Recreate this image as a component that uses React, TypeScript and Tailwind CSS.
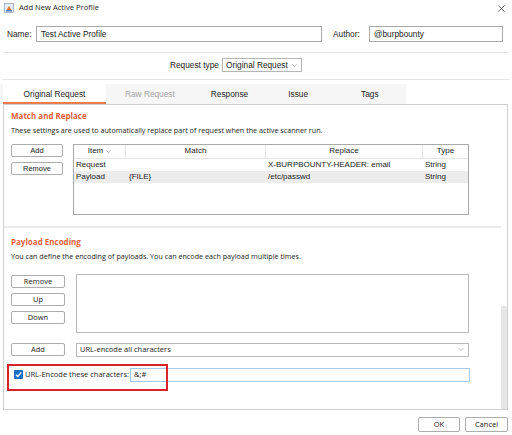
import * as React from "react"

const arial = { fontFamily: '"Liberation Sans", Arial, sans-serif' }
const segoe = { fontFamily: '"Open Sans", "Noto Sans", sans-serif' }

function Chevron({ className = "" }: { className?: string }) {
  return (
    <svg viewBox="0 0 8 5" className={className} fill="none" stroke="#8a8a8a" strokeWidth="1">
      <polyline points="0.5,0.5 4,4 7.5,0.5" />
    </svg>
  )
}

function Btn({ label, w, seg }: { label: string; w: string; seg?: boolean }) {
  return (
    <div
      className={`${w} flex h-[13px] items-center justify-center rounded-[2px] border border-[#adadad] bg-white text-[7.5px] text-[#222]`}
      style={seg ? segoe : arial}
    >
      {label}
    </div>
  )
}

const rows = [
  { item: "Request", match: "", replace: "X-BURPBOUNTY-HEADER: email", type: "String", sel: false },
  { item: "Payload", match: "{FILE}", replace: "/etc/passwd", type: "String", sel: true },
]

export default function App() {
  return (
    <div className="relative h-[435px] w-[512px] overflow-hidden bg-white text-[#1c1c1c]">
      {/* title bar */}
      <div className="flex h-[15px] items-center pl-[4px] pr-[7px] pt-[1px]" style={segoe}>
        <svg viewBox="0 0 10 10" className="h-[10px] w-[10px]">
          <rect x="0.5" y="0.5" width="9" height="9" fill="#e9eef5" stroke="#8fa6c4" strokeWidth="0.8" />
          <path d="M2 8 L5 3 L8 8 Z" fill="#e0742f" />
          <rect x="2" y="7" width="6" height="1.5" fill="#4a7ab7" />
        </svg>
        <span className="ml-[5px] text-[7.6px]">Add New Active Profile</span>
        <span className="ml-auto">
          <svg viewBox="0 0 8 8" className="h-[7px] w-[7px]" stroke="#333" strokeWidth="0.9">
            <line x1="0.5" y1="0.5" x2="7.5" y2="7.5" />
            <line x1="7.5" y1="0.5" x2="0.5" y2="7.5" />
          </svg>
        </span>
      </div>

      {/* name / author */}
      <div className="mt-[11px] flex h-[16px] items-center text-[8.3px]" style={arial}>
        <span className="ml-[7px] w-[29px]">Name:</span>
        <div className="flex h-[16px] w-[286px] items-center border border-[#a9a9a9] pl-[4px]">
          Test Active Profile
        </div>
        <span className="ml-[11px] w-[36px]">Author:</span>
        <div className="flex h-[16px] w-[134px] items-center border border-[#a9a9a9] pl-[4px]">
          @burpbounty
        </div>
      </div>

      <div className="mx-[3px] mt-[10px] h-px bg-[#e4e4e4]" />

      {/* request type */}
      <div className="mt-[5px] flex h-[14px] items-center whitespace-nowrap text-[8.3px]" style={arial}>
        <span className="ml-[170px] w-[52px]">Request type</span>
        <div className="flex h-[14px] w-[80px] shrink-0 items-center border border-[#b5b5b5] pl-[3px]">
          Original Request
          <Chevron className="ml-auto mr-[4px] h-[3px] w-[5px]" />
        </div>
      </div>

      <div className="mx-[3px] mt-[7px] h-px bg-[#e4e4e4]" />

      {/* tabs */}
      <div className="mt-[4px] flex h-[20px] text-[8.3px]" style={arial}>
        <div className="flex w-[406px] bg-[#f6f6f6] pl-[3px]">
          <div className="flex w-[103px] items-center justify-center border-b-2 border-[#ef7a4c] bg-white pt-[2px]">
            Original Request
          </div>
          <div className="ml-[19px] flex items-center text-[#a3a3a3]">Raw Request</div>
          <div className="ml-[36px] flex items-center">Response</div>
          <div className="ml-[40px] flex items-center">Issue</div>
          <div className="ml-[53px] flex items-center">Tags</div>
        </div>
      </div>

      {/* panel */}
      <div className="ml-[3px] flex h-[306px] w-[505px] border border-[#cfcfcf]">
        <div className="flex w-[497px] flex-col">
          {/* match and replace */}
          <div className="h-[121px] pl-[7px]">
            <div className="mt-[5px] text-[8px] font-bold text-[#e2603a]" style={segoe}>
              Match and Replace
            </div>
            <div className="mt-[3px] text-[7.2px]" style={segoe}>
              These settings are used to automatically replace part of request when the active scanner run.
            </div>
            <div className="mt-[8px] flex">
              <div className="flex flex-col gap-[5px]">
                <Btn label="Add" w="w-[52px]" />
                <Btn label="Remove" w="w-[52px]" />
              </div>
              <div className="ml-[10px] h-[71px] w-[396px] border border-[#a9a9a9] text-[8px]" style={arial}>
                <div className="flex h-[14px] border-b border-[#e4e4e4]">
                  <div className="flex w-[52px] items-center justify-center border-r border-[#e4e4e4]">
                    Item
                    <Chevron className="ml-[3px] h-[3px] w-[5px]" />
                  </div>
                  <div className="flex w-[140px] items-center justify-center border-r border-[#e4e4e4]">Match</div>
                  <div className="flex w-[157px] items-center justify-center border-r border-[#e4e4e4]">Replace</div>
                  <div className="flex flex-1 items-center justify-center">Type</div>
                </div>
                {rows.map((r) => (
                  <div key={r.item} className={`flex h-[12px] items-center ${r.sel ? "bg-[#ececec]" : ""}`}>
                    <div className="w-[52px] pl-[2px]">{r.item}</div>
                    <div className="w-[140px] pl-[3px]">{r.match}</div>
                    <div className="w-[157px] pl-[2px]">{r.replace}</div>
                    <div className="flex-1 pl-[2px]">{r.type}</div>
                  </div>
                ))}
              </div>
            </div>
          </div>

          <div className="h-[2px] bg-[#ebebeb]" />

          {/* payload encoding */}
          <div className="relative flex-1 pl-[7px]" style={segoe}>
            <div className="mt-[8px] text-[8px] font-bold text-[#e2603a]">Payload Encoding</div>
            <div className="mt-[3px] text-[7.2px]">
              You can define the encoding of payloads. You can encode each payload multiple times.
            </div>
            <div className="mt-[12px] flex">
              <div className="flex flex-col gap-[5px] pt-[1px]">
                <Btn label="Remove" w="w-[54px]" seg />
                <Btn label="Up" w="w-[54px]" seg />
                <Btn label="Down" w="w-[54px]" seg />
              </div>
              <div className="ml-[11px] h-[59px] w-[393px] border border-[#b8b8b8]" />
            </div>
            <div className="mt-[10px] flex">
              <Btn label="Add" w="w-[54px]" seg />
              <div className="ml-[11px] flex h-[14px] w-[393px] items-center border border-[#b8b8b8] pl-[3px] text-[7.5px]">
                URL-encode all characters
                <Chevron className="ml-auto mr-[4px] h-[3px] w-[6px]" />
              </div>
            </div>
            <div className="mt-[11px] flex items-center">
              <svg viewBox="0 0 10 10" className="ml-[3px] h-[9px] w-[9px]">
                <rect x="0" y="0" width="10" height="10" rx="1" fill="#1f6ec4" />
                <polyline points="2.2,5.2 4.2,7.2 8,2.8" fill="none" stroke="#fff" strokeWidth="1.4" />
              </svg>
              <span className="ml-[2px] w-[105px] text-[7.5px]">URL-Encode these characters:</span>
              <div className="flex h-[14px] w-[340px] items-center border border-[#a6c8ea] pl-[3px] text-[7.5px]">
                &amp;;#
              </div>
            </div>
            {/* annotation box */}
            <div className="absolute left-[3px] top-[136px] h-[27px] w-[161px] border-2 border-[#d8232a]" />
          </div>
        </div>
        {/* scrollbar */}
        <div className="flex w-[6px] flex-col justify-end">
          <div className="h-[103px] bg-[#e6e6e6]" />
        </div>
      </div>

      {/* footer */}
      <div className="mt-[7px] flex justify-end gap-[5px] pr-[4px]">
        <Btn label="OK" w="w-[42px] h-[15px]" seg />
        <Btn label="Cancel" w="w-[43px] h-[15px]" seg />
      </div>
    </div>
  )
}
